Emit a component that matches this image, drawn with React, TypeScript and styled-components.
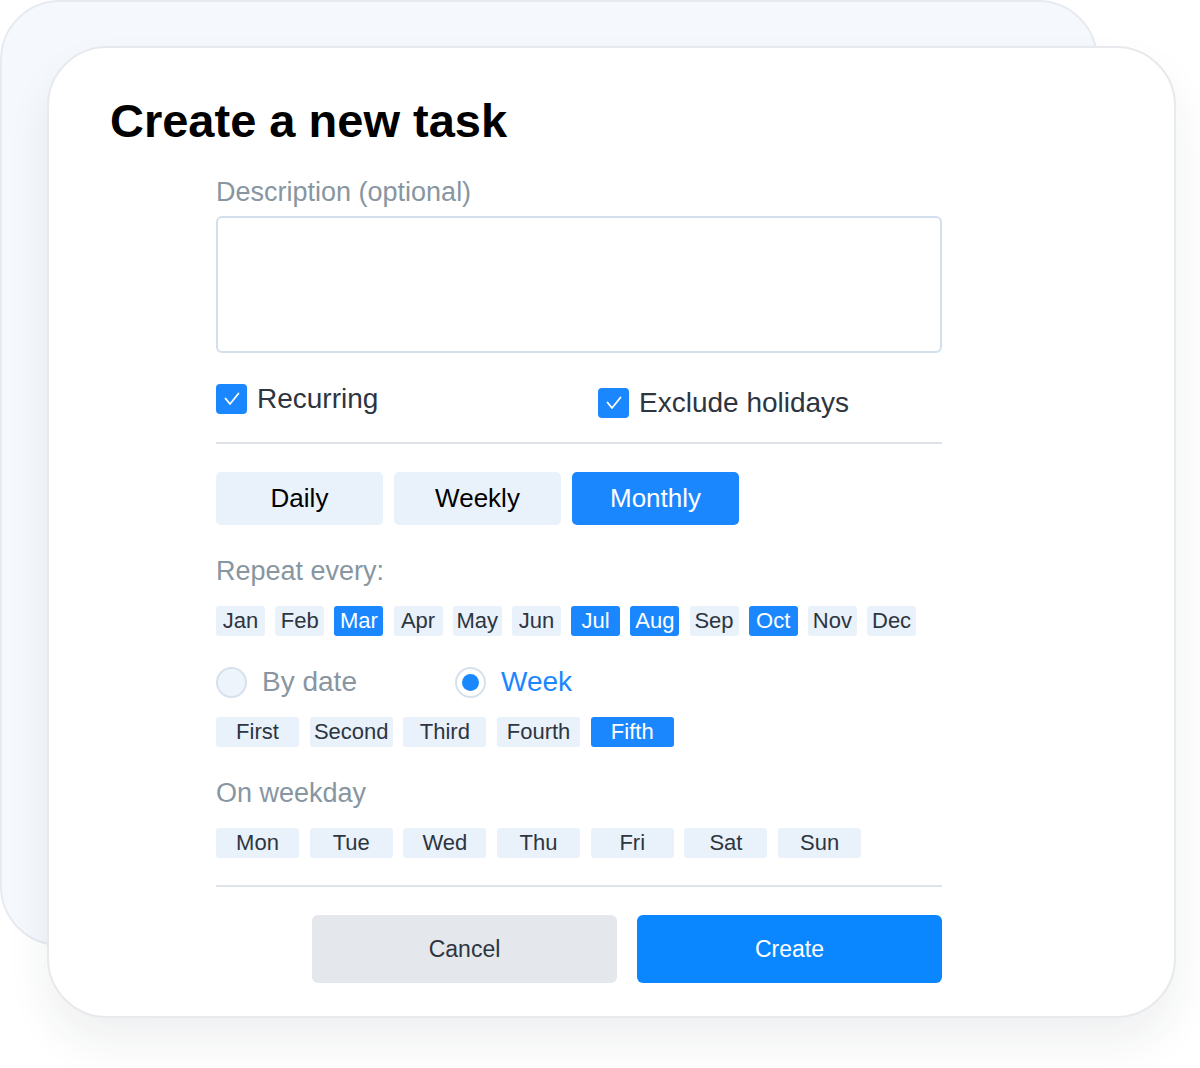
import React from "react";
import styled, { createGlobalStyle } from "styled-components";

const COLORS = {
  blue: "#1a87ff",
  blueStrong: "#0a86ff",
  chip: "#e9f1fa",
  ink: "#2d3540",
  muted: "#8796a1",
  line: "#dde3e9",
  field: "#d3dfec",
  cancel: "#e4e7eb",
};

const GlobalStyle = createGlobalStyle`
  * { box-sizing: border-box; }
  body {
    margin: 0;
    background: #ffffff;
    font-family: "Liberation Sans", Arial, Helvetica, sans-serif;
    color: ${COLORS.ink};
  }
`;

const Stage = styled.div`
  position: relative;
  width: 1200px;
  height: 1068px;
  padding: 46px 0 0 47px;
  overflow: hidden;
`;

// the sheet lying under the dialog
const BackSheet = styled.div`
  position: absolute;
  left: 0;
  top: 0;
  width: 1098px;
  height: 946px;
  border-radius: 60px;
  background: #f5f8fd;
  border: 2px solid #e7ebf1;
`;

const Card = styled.div`
  position: relative;
  width: 1129px;
  height: 972px;
  border-radius: 60px;
  background: #ffffff;
  border: 2px solid #e8e9ed;
  box-shadow: 0 24px 44px rgba(30, 40, 60, 0.07);
  padding: 45px 0 0 61px;
`;

const Title = styled.h1`
  margin: 0;
  font-size: 47px;
  line-height: 56px;
  font-weight: 700;
  color: #000;
`;

const Form = styled.div`
  width: 726px;
  margin-left: 106px;
  display: flex;
  flex-direction: column;
`;

const Label = styled.div<{ $top: number }>`
  margin-top: ${(p) => p.$top}px;
  font-size: 27px;
  line-height: 34px;
  color: ${COLORS.muted};
`;

const Description = styled.textarea`
  margin-top: 7px;
  height: 137px;
  width: 100%;
  border: 2px solid ${COLORS.field};
  border-radius: 6px;
  resize: none;
  outline: none;
  font-family: inherit;
  font-size: 22px;
  padding: 12px 16px;
`;

const CheckRow = styled.div`
  margin-top: 31px;
  display: grid;
  grid-template-columns: 382px auto;
  align-items: start;
`;

const CheckItem = styled.label<{ $shift?: number }>`
  display: flex;
  align-items: center;
  gap: 10px;
  margin-top: ${(p) => p.$shift || 0}px;
  font-size: 28px;
  line-height: 30px;
  color: ${COLORS.ink};
`;

const CheckBox = styled.span`
  width: 31px;
  height: 30px;
  border-radius: 4px;
  background: ${COLORS.blue};
  display: flex;
  align-items: center;
  justify-content: center;
`;

const Divider = styled.div<{ $top: number }>`
  margin-top: ${(p) => p.$top}px;
  height: 2px;
  background: ${COLORS.line};
`;

const Segments = styled.div`
  margin-top: 28px;
  display: flex;
  gap: 11px;
`;

const Segment = styled.button<{ $active?: boolean }>`
  width: 167px;
  height: 53px;
  border: none;
  border-radius: 5px;
  font-family: inherit;
  font-size: 26px;
  background: ${(p) => (p.$active ? COLORS.blue : COLORS.chip)};
  color: ${(p) => (p.$active ? "#fff" : "#000")};
`;

const ChipRow = styled.div<{ $top: number; $gap: number }>`
  margin-top: ${(p) => p.$top}px;
  display: flex;
  gap: ${(p) => p.$gap}px;
`;

const Chip = styled.span<{ $active?: boolean; $width: number }>`
  width: ${(p) => p.$width}px;
  height: 30px;
  border-radius: 3px;
  display: flex;
  align-items: center;
  justify-content: center;
  font-size: 22px;
  background: ${(p) => (p.$active ? COLORS.blue : COLORS.chip)};
  color: ${(p) => (p.$active ? "#fff" : COLORS.ink)};
`;

const RadioRow = styled.div`
  margin-top: 31px;
  display: grid;
  grid-template-columns: 239px auto;
`;

const RadioOption = styled.label<{ $active?: boolean }>`
  display: flex;
  align-items: center;
  gap: 15px;
  height: 30px;
  font-size: 28px;
  color: ${(p) => (p.$active ? COLORS.blue : COLORS.muted)};
`;

const RadioDot = styled.span<{ $active?: boolean }>`
  width: 31px;
  height: 31px;
  border-radius: 50%;
  border: 2px solid #d6e1ed;
  background: ${(p) => (p.$active ? "#fff" : "#eef4fc")};
  display: flex;
  align-items: center;
  justify-content: center;

  &::after {
    content: "";
    display: ${(p) => (p.$active ? "block" : "none")};
    width: 17px;
    height: 17px;
    border-radius: 50%;
    background: ${COLORS.blue};
  }
`;

const Actions = styled.div`
  margin-top: 28px;
  display: flex;
  justify-content: flex-end;
  gap: 20px;
`;

const ActionButton = styled.button<{ $primary?: boolean }>`
  width: 305px;
  height: 68px;
  border: none;
  border-radius: 6px;
  font-family: inherit;
  font-size: 23px;
  background: ${(p) => (p.$primary ? COLORS.blueStrong : COLORS.cancel)};
  color: ${(p) => (p.$primary ? "#fff" : COLORS.ink)};
`;

const Check = () => (
  <svg width="18" height="16" viewBox="0 0 18 16" fill="none">
    <path d="M2.5 7.5 L7 13 L15.5 2.5" stroke="#fff" strokeWidth="1.8" strokeLinecap="round" strokeLinejoin="round" />
  </svg>
);

const MONTHS = ["Jan", "Feb", "Mar", "Apr", "May", "Jun", "Jul", "Aug", "Sep", "Oct", "Nov", "Dec"];
const ACTIVE_MONTHS = ["Mar", "Jul", "Aug", "Oct"];
const WEEKS = ["First", "Second", "Third", "Fourth", "Fifth"];
const DAYS = ["Mon", "Tue", "Wed", "Thu", "Fri", "Sat", "Sun"];

const App: React.FC = () => {
  return (
    <>
      <GlobalStyle />
      <Stage>
        <BackSheet />
        <Card>
          <Title>Create a new task</Title>
          <Form>
            <Label $top={26}>Description (optional)</Label>
            <Description />

            <CheckRow>
              <CheckItem>
                <CheckBox>
                  <Check />
                </CheckBox>
                Recurring
              </CheckItem>
              <CheckItem $shift={4}>
                <CheckBox>
                  <Check />
                </CheckBox>
                Exclude holidays
              </CheckItem>
            </CheckRow>

            <Divider $top={24} />

            <Segments>
              <Segment>Daily</Segment>
              <Segment>Weekly</Segment>
              <Segment $active>Monthly</Segment>
            </Segments>

            <Label $top={29}>Repeat every:</Label>
            <ChipRow $top={18} $gap={10.2}>
              {MONTHS.map((m) => (
                <Chip key={m} $width={49} $active={ACTIVE_MONTHS.includes(m)}>
                  {m}
                </Chip>
              ))}
            </ChipRow>

            <RadioRow>
              <RadioOption>
                <RadioDot />
                By date
              </RadioOption>
              <RadioOption $active>
                <RadioDot $active />
                Week
              </RadioOption>
            </RadioRow>

            <ChipRow $top={20} $gap={10.7}>
              {WEEKS.map((w) => (
                <Chip key={w} $width={83} $active={w === "Fifth"}>
                  {w}
                </Chip>
              ))}
            </ChipRow>

            <Label $top={29}>On weekday</Label>
            <ChipRow $top={18} $gap={10.7}>
              {DAYS.map((d) => (
                <Chip key={d} $width={83}>
                  {d}
                </Chip>
              ))}
            </ChipRow>

            <Divider $top={27} />

            <Actions>
              <ActionButton>Cancel</ActionButton>
              <ActionButton $primary>Create</ActionButton>
            </Actions>
          </Form>
        </Card>
      </Stage>
    </>
  );
};

export default App;
